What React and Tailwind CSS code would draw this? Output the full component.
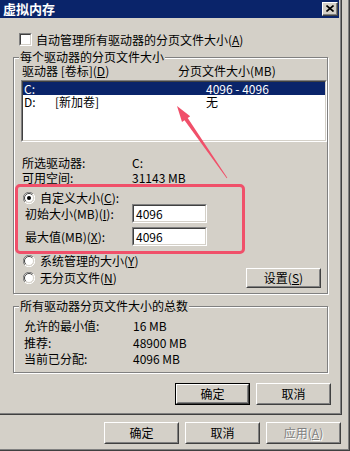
import React from "react";

// classic win32 access-key underline
const U = ({ c }) => <span className="underline underline-offset-[1px]">{c}</span>;

function Sunken({ className = "", children }) {
  return (
    <div className={`border border-t-[#808080] border-l-[#808080] border-r-white border-b-white ${className}`}>
      <div className="h-full w-full border border-t-[#404040] border-l-[#404040] border-r-[#d4d0c8] border-b-[#d4d0c8] bg-white">
        {children}
      </div>
    </div>
  );
}

function Button({ children, def, disabled }) {
  const face = (
    <div className="h-full w-full border border-t-white border-l-white border-r-[#404040] border-b-[#404040]">
      <div className="h-full w-full border border-t-[#d4d0c8] border-l-[#d4d0c8] border-r-[#808080] border-b-[#808080] flex items-center justify-center">
        <span className={disabled ? "text-[#808080] [text-shadow:1px_1px_0_#fff]" : ""}>{children}</span>
      </div>
    </div>
  );
  return (
    <div className={`w-[75px] h-[22px] ${def ? "border border-black" : ""}`}>{face}</div>
  );
}

function Radio({ checked }) {
  return (
    <svg width="12" height="12" viewBox="0 0 12 12" className="shrink-0">
      <circle cx="6" cy="6" r="5" fill="#fff" />
      <path d="M1.9 10.1A5.6 5.6 0 0 1 10.1 1.9" stroke="#808080" fill="none" />
      <path d="M10.1 1.9A5.6 5.6 0 0 1 1.9 10.1" stroke="#fff" fill="none" />
      <path d="M2.8 9.2A4.5 4.5 0 0 1 9.2 2.8" stroke="#404040" fill="none" />
      <path d="M9.2 2.8A4.5 4.5 0 0 1 2.8 9.2" stroke="#d4d0c8" fill="none" />
      {checked && <circle cx="6" cy="6" r="2" fill="#000" />}
    </svg>
  );
}

function CloseBtn() {
  return (
    <div className="w-[16px] h-[14px] mr-[1px] bg-[#d4d0c8] border border-t-white border-l-white border-r-[#404040] border-b-[#404040]">
      <div className="h-full w-full border-r border-b border-[#808080] flex items-center justify-center">
        <svg width="8" height="7" viewBox="0 0 8 7">
          <path d="M0.5 0.5L7.5 6.5M7.5 0.5L0.5 6.5" stroke="#000" strokeWidth="1.6" />
        </svg>
      </div>
    </div>
  );
}

export default function App() {
  return (
    <div className="relative w-[350px] h-[451px] overflow-hidden bg-[#d4d0c8] border-r border-b border-[#404040] text-[12px] leading-[12px] text-black font-['Noto_Sans_CJK_SC',sans-serif]">
      <div className="h-full border-r border-b border-[#808080] flex flex-col">
        {/* dialog */}
        <div className="w-[342px] h-[415px] border-r border-b border-[#404040]">
          <div className="h-full border-r border-b border-[#808080] flex flex-col">
            <div className="h-[18px] mr-[1px] bg-[#0a246a] flex items-center justify-between pl-[3px]">
              <span className="text-white font-bold text-[13px] leading-[18px]">虚拟内存</span>
              <CloseBtn />
            </div>

            <div className="mt-[15px] ml-[19px] h-[13px] flex items-center gap-[4px]">
              <Sunken className="w-[13px] h-[13px]" />
              <span>
                自动管理所有驱动器的分页文件大小(<U c="A" />)
              </span>
            </div>

            {/* per-drive group */}
            <div className="mt-[11px] ml-[13px] w-[315px] h-[237px] border border-[#808080] shadow-[inset_1px_1px_0_#fff,1px_1px_0_#fff] flex flex-col">
              <span className="-mt-[7px] ml-[5px] px-[1px] self-start bg-[#d4d0c8]">每个驱动器的分页文件大小</span>
              <div className="mt-[2px] pl-[8px] flex">
                <span className="w-[156px]">
                  驱动器 [卷标](<U c="D" />)
                </span>
                <span>分页文件大小(MB)</span>
              </div>
              <Sunken className="mt-[3px] ml-[7px] w-[306px] h-[62px]">
                <div className="h-[13px] bg-[#0a246a] text-white flex items-center pl-[1px]">
                  <span className="w-[182px]">C:</span>
                  <span>4096 - 4096</span>
                </div>
                <div className="h-[13px] flex items-center pl-[1px]">
                  <span className="w-[31px]">D:</span>
                  <span className="w-[151px]">[新加卷]</span>
                  <span>无</span>
                </div>
              </Sunken>

              <div className="mt-[15px] pl-[8px] flex">
                <span className="w-[110px]">所选驱动器:</span>
                <span>C:</span>
              </div>
              <div className="mt-[3px] pl-[8px] flex">
                <span className="w-[110px]">可用空间:</span>
                <span>31143 MB</span>
              </div>

              <div className="mt-[8px] h-[12px] pl-[9px] flex items-center gap-[5px]">
                <Radio checked />
                <span>
                  自定义大小(<U c="C" />):
                </span>
              </div>
              <div className="h-[19px] pl-[11px] flex items-center">
                <span className="w-[107px]">
                  初始大小(MB)(<U c="I" />):
                </span>
                <Sunken className="w-[75px] h-[19px]">
                  <div className="h-full flex items-center pl-[2px]">4096</div>
                </Sunken>
              </div>
              <div className="mt-[4px] h-[19px] pl-[11px] flex items-center">
                <span className="w-[107px]">
                  最大值(MB)(<U c="X" />):
                </span>
                <Sunken className="w-[75px] h-[19px]">
                  <div className="h-full flex items-center pl-[2px]">4096</div>
                </Sunken>
              </div>
              <div className="mt-[9px] h-[12px] pl-[9px] flex items-center gap-[5px]">
                <Radio />
                <span>
                  系统管理的大小(<U c="Y" />)
                </span>
              </div>
              <div className="mt-[1px] h-[20px] pl-[9px] pr-[6px] flex items-center">
                <Radio />
                <span className="ml-[5px]">
                  无分页文件(<U c="N" />)
                </span>
                <div className="ml-auto">
                  <div className="w-[75px] h-[20px] border border-t-white border-l-white border-r-[#404040] border-b-[#404040]">
                    <div className="h-full w-full border border-t-[#d4d0c8] border-l-[#d4d0c8] border-r-[#808080] border-b-[#808080] flex items-center justify-center">
                      设置(<U c="S" />)
                    </div>
                  </div>
                </div>
              </div>
            </div>

            {/* totals group */}
            <div className="mt-[12px] ml-[13px] w-[315px] h-[67px] border border-[#808080] shadow-[inset_1px_1px_0_#fff,1px_1px_0_#fff] flex flex-col">
              <span className="-mt-[7px] ml-[5px] px-[1px] self-start bg-[#d4d0c8]">所有驱动器分页文件大小的总数</span>
              <div className="mt-[8px] pl-[10px] flex">
                <span className="w-[109px]">允许的最小值:</span>
                <span>16 MB</span>
              </div>
              <div className="mt-[5px] pl-[10px] flex">
                <span className="w-[109px]">推荐:</span>
                <span>48900 MB</span>
              </div>
              <div className="mt-[4px] pl-[10px] flex">
                <span className="w-[109px]">当前已分配:</span>
                <span>4096 MB</span>
              </div>
            </div>

            <div className="mt-[10px] ml-[175px] flex gap-[6px]">
              <Button def>确定</Button>
              <Button>取消</Button>
            </div>
          </div>
        </div>

        {/* parent sheet buttons */}
        <div className="mt-[7px] ml-[104px] flex gap-[6px]">
          <Button>确定</Button>
          <Button>取消</Button>
          <Button disabled>
            应用(<U c="A" />)
          </Button>
        </div>
      </div>

      {/* red annotation */}
      <div className="absolute left-[15px] top-[184px] w-[230px] h-[70px] border-[3px] border-[#f0506a] rounded-[5px] pointer-events-none" />
      <svg className="absolute left-0 top-0 pointer-events-none" width="350" height="451">
        <polygon
          points="177,106 190.2,116.3 187.7,118 227.3,177.8 226.7,178.2 184.5,120.2 182,121.9"
          fill="#f0506a"
        />
      </svg>
    </div>
  );
}
